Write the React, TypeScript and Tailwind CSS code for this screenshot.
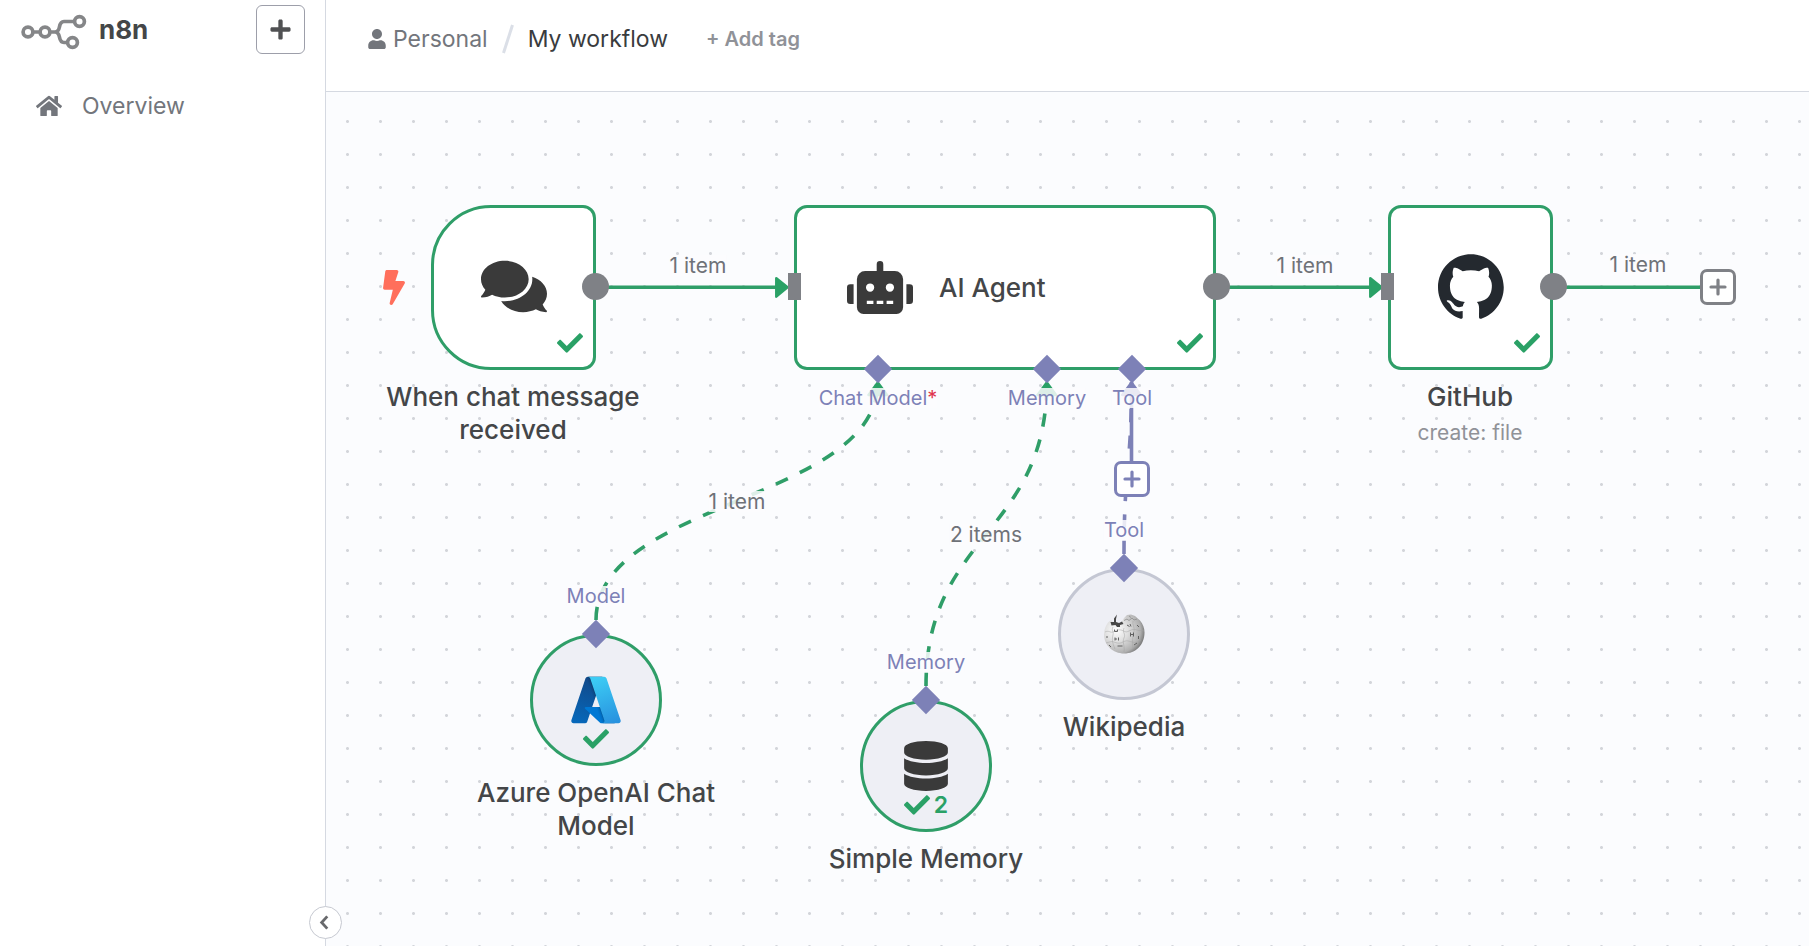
import type { ReactNode } from "react";
import {
  FaBolt,
  FaCheck,
  FaComments,
  FaDatabase,
  FaHome,
  FaPlus,
  FaRobot,
  FaUser,
} from "react-icons/fa";

const GREEN = "#2f9e68";
const PURPLE = "#7d81b7";

function N8nLogo() {
  return (
    <svg viewBox="0 0 66 36" className="h-9 w-[66px]" fill="none" stroke="#858688" strokeWidth="3.700" aria-hidden="true">
      <circle cx="7" cy="18" r="4.900" />
      <circle cx="24" cy="18" r="4.900" />
      <circle cx="58.500" cy="7.500" r="4.900" />
      <circle cx="51.500" cy="28.500" r="4.900" />
      <path d="M12 18h7M29 18h5C41 18 36 7.500 43 7.500H53.500M34 18C41 18 36 28.500 43 28.500h3.500" />
    </svg>
  );
}

function GithubMark() {
  return (
    <svg viewBox="0 0 98 96" className="h-[65px] w-[66px]" aria-hidden="true">
      <path
        fill="#24292f"
        fillRule="evenodd"
        clipRule="evenodd"
        d="M48.854 0C21.839 0 0 22 0 49.217c0 21.756 13.993 40.172 33.405 46.69 2.427.49 3.316-1.059 3.316-2.362 0-1.141-.08-5.052-.08-9.127-13.59 2.934-16.42-5.867-16.42-5.867-2.184-5.704-5.42-7.17-5.42-7.17-4.448-3.015.324-3.015.324-3.015 4.934.326 7.523 5.052 7.523 5.052 4.367 7.496 11.404 5.378 14.235 4.074.404-3.178 1.699-5.378 3.074-6.6-10.839-1.141-22.243-5.378-22.243-24.283 0-5.378 1.94-9.778 5.014-13.2-.485-1.222-2.184-6.275.486-13.038 0 0 4.125-1.304 13.426 5.052a46.97 46.97 0 0 1 12.214-1.63c4.125 0 8.33.571 12.213 1.63 9.302-6.356 13.427-5.052 13.427-5.052 2.67 6.763.97 11.816.485 13.038 3.155 3.422 5.015 7.822 5.015 13.2 0 18.905-11.404 23.06-22.324 24.283 1.78 1.548 3.316 4.481 3.316 9.126 0 6.6-.08 11.897-.08 13.526 0 1.304.89 2.853 3.316 2.364 19.412-6.52 33.405-24.935 33.405-46.691C97.707 22 75.788 0 48.854 0z"
      />
    </svg>
  );
}

function AzureMark() {
  return (
    <svg viewBox="0 0 96 96" className="size-[54px]" aria-hidden="true">
      <defs>
        <linearGradient id="azure-a" x1="-1032.172" x2="-1059.213" y1="145.312" y2="65.426" gradientTransform="matrix(1 0 0 -1 1075 158)" gradientUnits="userSpaceOnUse">
          <stop offset="0" stopColor="#114a8b" />
          <stop offset="1" stopColor="#0669bc" />
        </linearGradient>
        <linearGradient id="azure-b" x1="-1023.725" x2="-1029.980" y1="108.083" y2="105.968" gradientTransform="matrix(1 0 0 -1 1075 158)" gradientUnits="userSpaceOnUse">
          <stop offset="0" stopOpacity=".3" />
          <stop offset=".071" stopOpacity=".2" />
          <stop offset=".321" stopOpacity=".1" />
          <stop offset=".623" stopOpacity=".05" />
          <stop offset="1" stopOpacity="0" />
        </linearGradient>
        <linearGradient id="azure-c" x1="-1027.165" x2="-997.482" y1="147.642" y2="68.561" gradientTransform="matrix(1 0 0 -1 1075 158)" gradientUnits="userSpaceOnUse">
          <stop offset="0" stopColor="#3ccbf4" />
          <stop offset="1" stopColor="#2892df" />
        </linearGradient>
      </defs>
      <path fill="url(#azure-a)" d="M33.338 6.544h26.038l-27.03 80.087a4.152 4.152 0 0 1-3.933 2.824H8.149a4.145 4.145 0 0 1-3.928-5.47L29.404 9.368a4.152 4.152 0 0 1 3.934-2.825z" />
      <path fill="#0078d4" d="M71.175 60.261h-41.29a1.911 1.911 0 0 0-1.305 3.309l26.532 24.764a4.171 4.171 0 0 0 2.846 1.121h23.38z" />
      <path fill="url(#azure-b)" d="M33.338 6.544a4.118 4.118 0 0 0-3.943 2.879L4.252 83.917a4.14 4.14 0 0 0 3.908 5.538h20.787a4.443 4.443 0 0 0 3.41-2.9l5.014-14.777 17.91 16.705a4.237 4.237 0 0 0 2.666.972H81.24L71.024 60.261l-29.781.007L59.47 6.544z" />
      <path fill="url(#azure-c)" d="M66.595 9.364a4.145 4.145 0 0 0-3.928-2.82H33.648a4.146 4.146 0 0 1 3.928 2.82l25.184 74.62a4.146 4.146 0 0 1-3.928 5.472h29.02a4.146 4.146 0 0 0 3.927-5.472z" />
    </svg>
  );
}

function WikipediaGlobe() {
  return (
    <svg viewBox="0 0 42 42" className="size-[42px]" fill="none" aria-hidden="true">
      <defs>
        <radialGradient id="globe" cx=".3" cy=".4" r=".75">
          <stop offset="0" stopColor="#ffffff" />
          <stop offset=".4" stopColor="#dedede" />
          <stop offset=".8" stopColor="#b0b0b0" />
          <stop offset="1" stopColor="#6a6a6a" />
        </radialGradient>
      </defs>
      <path fill="url(#globe)" d="M5 9.500L8 7l5 5 5-2 3-5 3-3 4-.500 4 1.500 5 4.500c3 3.500 4.500 7.500 4.500 12C41.500 32 32.500 40.500 21.200 40.500S1 32 1 21.500C1 17 2.400 13 5 9.500z" />
      <path fill="#484848" d="M7.500 9l3.500 0 0-3.500L14 1.500l-1 4.500 0 3 3 1 3-1.500 1.500 2.500-3.500 1 0 2-3 0-1.500-2-4 .5z" />
      <path stroke="#8d8d8d" strokeWidth=".8" d="M21 7.500l3-1.500 2 1.500 3-2.500 2 2 3-1M26 3l2 1.500" />
      <path stroke="#a3a3a3" strokeWidth=".5" d="M2 19c4-2 5 1 8 0s4-3 8-2 4 3 8 1 5-2 8-1 5 0 7 1M3 30c4-1 5-2 8-1s5 2 9 0 5-1 9 0 6 0 9-2M10 14c-2 4 1 4 0 8s-1 7 2 14M21 15c-2 4 2 6 0 10s1 8 0 14M30 8c-1 4 2 6 1 10s-2 8-1 17" />
      <path stroke="#606060" strokeWidth="1" d="M11.500 16.500v2h3v-2M24 12l2.500 1.500m.5-2.500l1 2.500M12 24.500v3m0-1.500h2m1.500-1.500v3M27.500 19.500v4m3-4v4m-3-2h3M14.500 33h5M3 24h2M31 32l3-2M34 12l2 2M35.500 23v3M6 32l2 2" />
    </svg>
  );
}

/* Canvas-space layer with every connection between nodes */
function Edges() {
  return (
    <svg className="pointer-events-none absolute left-0 top-0 h-[854px] w-[1483px]" fill="none" strokeWidth="3.600" aria-hidden="true">
      <g stroke={GREEN}>
        <path d="M270 195.300H452" />
        <path d="M890 195.300H1046" />
        <path d="M1227 195.300H1374" />
        <path strokeDasharray="13.200 13.200" d="M270 528C270 409 551.800 409 551.800 290" />
        <path strokeDasharray="13.200 13.200" d="M600 594C600 442 720.800 442 720.800 290" />
      </g>
      <g stroke={PURPLE}>
        <path strokeDasharray="13.200 13.200" d="M798 462C798 376 805.500 376 805.500 290" />
        <path d="M805.500 290V370" />
      </g>
      <g strokeWidth="2.500" strokeLinejoin="round" fill="#2aa166" stroke="#2aa166">
        <path d="M450.300 186.300l11.200 9-11.200 9.300z" />
        <path d="M1044.300 186.300l11.200 9-11.200 9.300z" />
        <path d="M542.500 303l9.300-12.500 9.300 12.500z" />
        <path d="M711.500 303l9.300-12.500 9.300 12.500z" />
      </g>
      <path d="M796.200 303l9.300-12.500 9.300 12.500z" strokeWidth="2.500" strokeLinejoin="round" fill={PURPLE} stroke={PURPLE} />
    </svg>
  );
}

function EdgeLabel({ place, children }: { place: string; children: ReactNode }) {
  return (
    <span className={`absolute -translate-x-1/2 whitespace-nowrap bg-[#fbfcfe]/85 text-[21px] leading-[21px] text-[#6f7278] ${place}`}>
      {children}
    </span>
  );
}

function PortLabel({ place, children }: { place: string; children: ReactNode }) {
  return (
    <span className={`absolute -translate-x-1/2 whitespace-nowrap bg-[#fbfcfe]/85 text-[20px] leading-5 text-[#7d81b7] ${place}`}>
      {children}
    </span>
  );
}

function Dot({ place }: { place: string }) {
  return <span className={`absolute size-[27px] rounded-full bg-[#7f8186] ${place}`} />;
}

function Port({ place }: { place: string }) {
  return <span className={`absolute h-[27px] w-[13px] bg-[#7f8186] ${place}`} />;
}

function Diamond({ place }: { place: string }) {
  return <span className={`absolute size-5 rotate-45 bg-[#7d81b7] ${place}`} />;
}

function NodeName({ place, title, subtitle }: { place: string; title: string; subtitle?: string }) {
  return (
    <div className={`absolute flex w-[264px] flex-col gap-1.5 text-center ${place}`}>
      <h2 className="text-[26px] font-medium leading-[33px] text-[#444648]">{title}</h2>
      {subtitle && <p className="text-[21px] leading-7 text-[#909298]">{subtitle}</p>}
    </div>
  );
}

function AddNodeButton({ className, label }: { className: string; label: string }) {
  return (
    <button type="button" aria-label={label} className={`absolute flex size-9 items-center justify-center rounded-[7px] border-3 bg-white ${className}`}>
      <svg viewBox="0 0 18 18" className="size-[18px]" stroke="currentColor" strokeWidth="3.200" strokeLinecap="round" aria-hidden="true">
        <path d="M9 2v14M2 9h14" />
      </svg>
    </button>
  );
}

function Sidebar() {
  return (
    <aside className="relative w-[326px] shrink-0 border-r border-[#d5d9e1] bg-white">
      <div className="flex items-start justify-between pl-[21px] pr-5 pt-[5px]">
        <div className="flex items-center gap-3 pt-[9px]">
          <N8nLogo />
          <span className="pb-1 text-[26px] font-bold leading-8 text-[#444648]">n8n</span>
        </div>
        <button type="button" aria-label="Create" className="flex size-[49px] items-center justify-center rounded-md border border-[#9d9faa] text-[#505153]">
          <FaPlus className="size-[23px]" />
        </button>
      </div>
      <nav className="pl-9 pt-9">
        <a href="#overview" className="flex items-center gap-5 text-[23px] leading-8 text-[#73767c]">
          <FaHome className="size-[26px]" />
          Overview
        </a>
      </nav>
      <button type="button" aria-label="Collapse sidebar" className="absolute -right-[17px] bottom-[7px] z-10 flex size-[33px] items-center justify-center rounded-full border border-[#c6c9d1] bg-white text-[#68696c]">
        <svg viewBox="0 0 10 16" className="mr-1 h-[15px] w-[10px]" fill="none" stroke="currentColor" strokeWidth="3" aria-hidden="true">
          <path d="M8.500 1.500L2.500 8l6 6.500" />
        </svg>
      </button>
    </aside>
  );
}

function Header() {
  return (
    <header className="flex h-[92px] items-center border-b border-[#d5d9e1] bg-white pb-[13px] pl-[42px]">
      <a href="#personal" className="flex items-center gap-[7px] text-[23px] text-[#73767c]">
        <FaUser className="h-5 w-[18px]" />
        Personal
      </a>
      <svg viewBox="0 0 12 30" className="mx-[14px] h-[30px] w-3" stroke="#dbdfe7" strokeWidth="3" aria-hidden="true">
        <path d="M10.500 1L1.500 29" />
      </svg>
      <h1 className="text-[23px] text-[#3a3c3e]">My workflow</h1>
      <button type="button" className="ml-[38px] text-[20px] font-semibold text-[#909298]">
        + Add tag
      </button>
    </header>
  );
}

function Canvas() {
  return (
    <main className="relative min-h-[854px] flex-1 overflow-hidden bg-[#fbfcfe] bg-[radial-gradient(circle,#d3d5da_1px,transparent_2px)] bg-[length:33px_33px] bg-[position:5px_13px]">
      <Edges />

      <FaBolt className="absolute left-[57px] top-[178px] h-[35px] w-[22px] text-[#ff6f5c]" />
      <section aria-label="When chat message received" className="absolute left-[105px] top-[113px] flex size-[165px] items-center justify-center rounded-l-[60px] rounded-r-[13px] border-3 border-[#2f9e68] bg-white pb-0.5">
        <FaComments className="h-[59px] w-[66px] text-[#3a3a3a]" />
        <FaCheck className="absolute bottom-[11px] right-[10px] size-[26px] text-[#2aa166]" />
      </section>
      <Dot place="left-[256px] top-[181px]" />
      <NodeName place="left-[55px] top-[288px]" title="When chat message received" />

      <section aria-label="AI Agent" className="absolute left-[468px] top-[113px] flex h-[165px] w-[422px] items-center gap-[26px] rounded-[13px] border-3 border-[#2f9e68] bg-white pl-[50px]">
        <FaRobot className="h-[53px] w-[66px] text-[#3a3a3a]" />
        <h2 className="text-[26px] font-medium leading-[33px] text-[#444648]">AI Agent</h2>
        <FaCheck className="absolute bottom-[11px] right-[10px] size-[26px] text-[#2aa166]" />
      </section>
      <Port place="left-[462px] top-[181px]" />
      <Dot place="left-[877px] top-[181px]" />
      <Diamond place="left-[542px] top-[267px]" />
      <Diamond place="left-[711px] top-[267px]" />
      <Diamond place="left-[796px] top-[267px]" />
      <PortLabel place="left-[552px] top-[296px]">
        Chat Model<span className="text-[#e0344c]">*</span>
      </PortLabel>
      <PortLabel place="left-[721px] top-[296px]">Memory</PortLabel>
      <PortLabel place="left-[806px] top-[296px]">Tool</PortLabel>
      <AddNodeButton label="Add tool" className="left-[788px] top-[369px] border-[#7d81b7] text-[#7d81b7]" />

      <section aria-label="GitHub" className="absolute left-[1062px] top-[113px] flex size-[165px] items-center justify-center rounded-[13px] border-3 border-[#2f9e68] bg-white pb-0.5">
        <GithubMark />
        <FaCheck className="absolute bottom-[11px] right-[10px] size-[26px] text-[#2aa166]" />
      </section>
      <Port place="left-[1055px] top-[181px]" />
      <Dot place="left-[1214px] top-[181px]" />
      <NodeName place="left-[1012px] top-[288px]" title="GitHub" subtitle="create: file" />
      <AddNodeButton label="Add next step" className="left-[1374px] top-[177px] border-[#7f8186] text-[#7f8186]" />

      <EdgeLabel place="left-[372px] top-[163px]">1 item</EdgeLabel>
      <EdgeLabel place="left-[979px] top-[163px]">1 item</EdgeLabel>
      <EdgeLabel place="left-[1312px] top-[162px]">1 item</EdgeLabel>
      <EdgeLabel place="left-[411px] top-[399px]">1 item</EdgeLabel>
      <EdgeLabel place="left-[660px] top-[432px]">2 items</EdgeLabel>

      <section aria-label="Azure OpenAI Chat Model" className="absolute left-[204px] top-[542px] flex size-[132px] items-center justify-center rounded-full border-3 border-[#2f9e68] bg-[#eeeff5]">
        <AzureMark />
        <FaCheck className="absolute bottom-[11px] size-[26px] text-[#2aa166]" />
      </section>
      <PortLabel place="left-[270px] top-[494px]">Model</PortLabel>
      <Diamond place="left-[260px] top-[532px]" />
      <NodeName place="left-[138px] top-[684px]" title="Azure OpenAI Chat Model" />

      <section aria-label="Simple Memory" className="absolute left-[534px] top-[608px] flex size-[132px] items-center justify-center rounded-full border-3 border-[#2f9e68] bg-[#eeeff5]">
        <FaDatabase className="h-[50px] w-11 text-[#3a3a3a]" />
        <span className="absolute bottom-[11px] flex items-center gap-1 text-[23px] font-semibold leading-[26px] text-[#2aa166]">
          <FaCheck className="size-[26px]" />2
        </span>
      </section>
      <PortLabel place="left-[600px] top-[560px]">Memory</PortLabel>
      <Diamond place="left-[590px] top-[598px]" />
      <NodeName place="left-[468px] top-[750px]" title="Simple Memory" />

      <section aria-label="Wikipedia" className="absolute left-[732px] top-[476px] flex size-[132px] items-center justify-center rounded-full border-3 border-[#c4c7d3] bg-[#eeeff5]">
        <WikipediaGlobe />
      </section>
      <PortLabel place="left-[798px] top-[428px]">Tool</PortLabel>
      <Diamond place="left-[788px] top-[466px]" />
      <NodeName place="left-[666px] top-[618px]" title="Wikipedia" />
    </main>
  );
}

export default function App() {
  return (
    <div className="flex min-h-screen font-[Inter,sans-serif]">
      <Sidebar />
      <div className="flex min-w-0 flex-1 flex-col">
        <Header />
        <Canvas />
      </div>
    </div>
  );
}
